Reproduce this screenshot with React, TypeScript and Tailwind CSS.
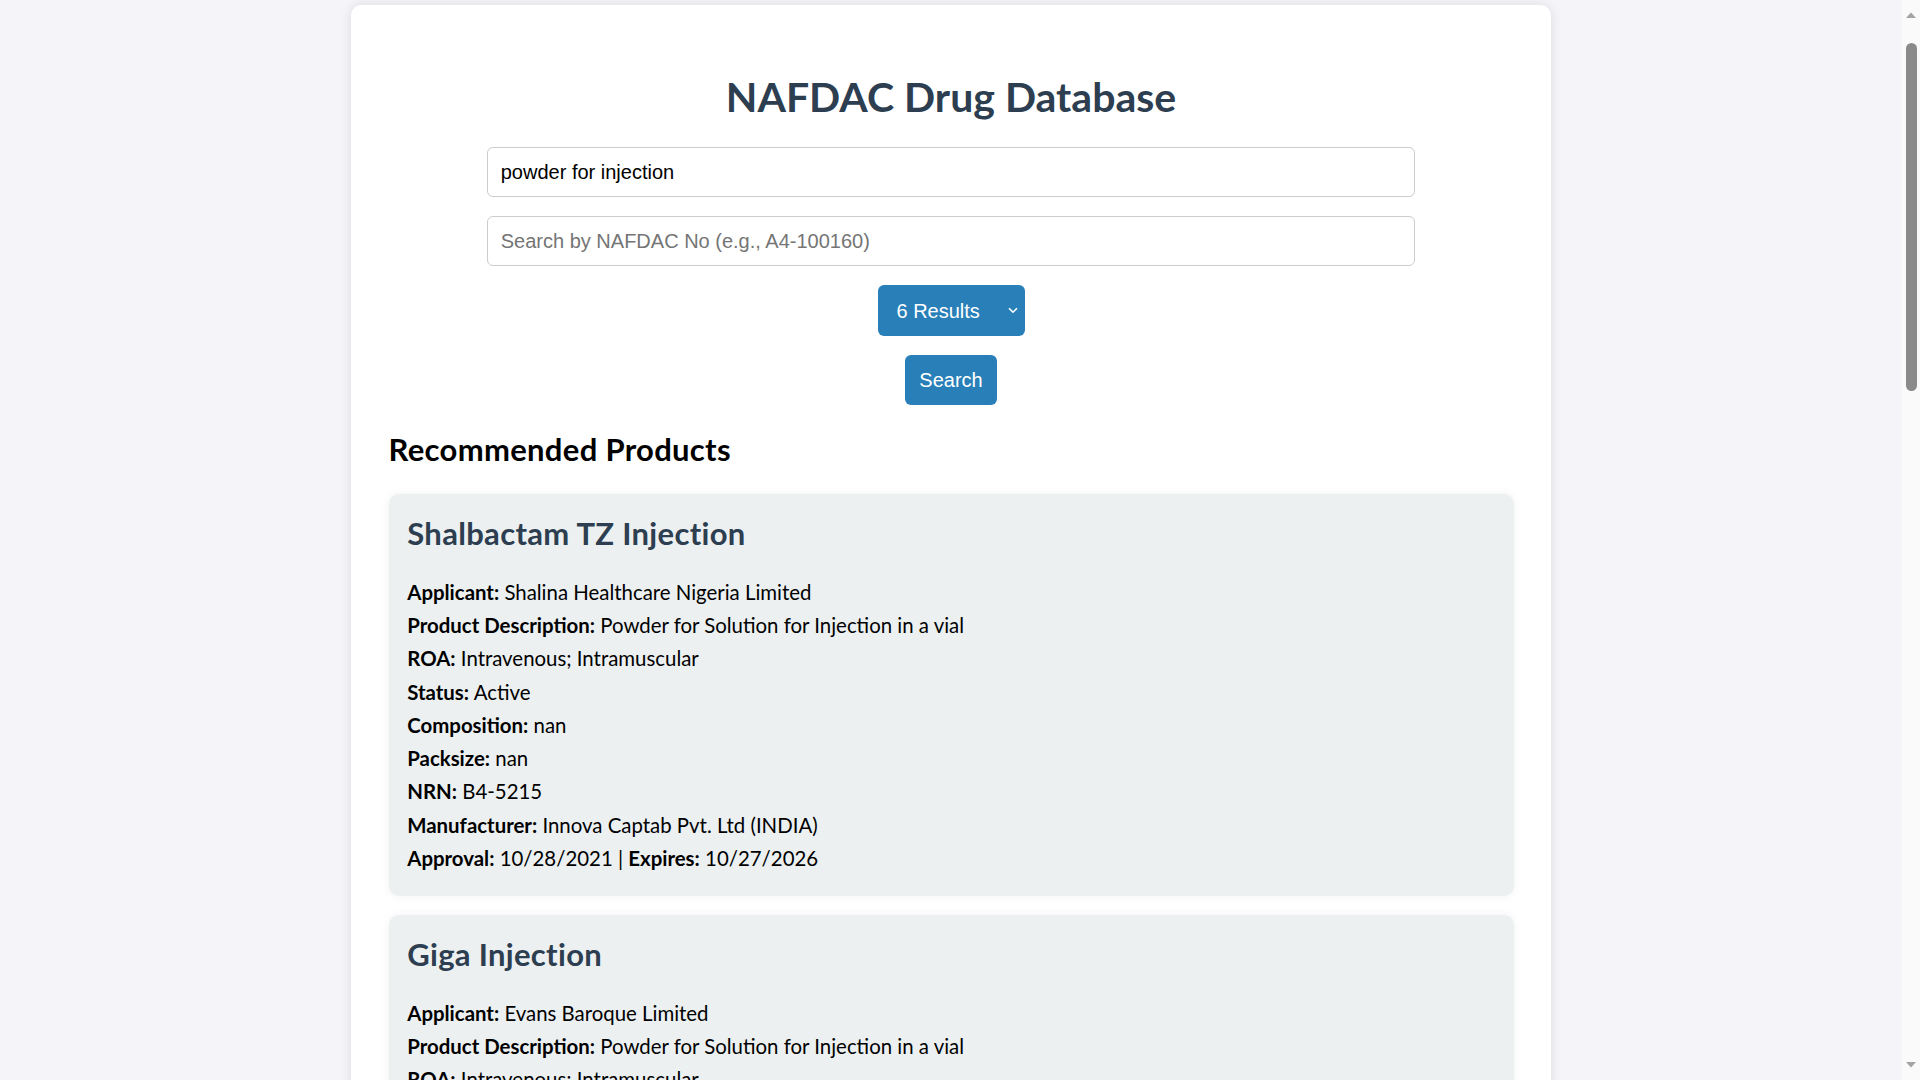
import React from "react";

type Product = {
  name: string;
  applicant: string;
  description: string;
  roa: string;
  status: string;
  composition: string;
  packsize: string;
  nrn: string;
  manufacturer: string;
  approval: string;
  expires: string;
};

const products: Product[] = [
  {
    name: "Shalbactam TZ Injection",
    applicant: "Shalina Healthcare Nigeria Limited",
    description: "Powder for Solution for Injection in a vial",
    roa: "Intravenous; Intramuscular",
    status: "Active",
    composition: "nan",
    packsize: "nan",
    nrn: "B4-5215",
    manufacturer: "Innova Captab Pvt. Ltd (INDIA)",
    approval: "10/28/2021",
    expires: "10/27/2026",
  },
  {
    name: "Giga Injection",
    applicant: "Evans Baroque Limited",
    description: "Powder for Solution for Injection in a vial",
    roa: "Intravenous; Intramuscular",
    status: "Active",
    composition: "nan",
    packsize: "nan",
    nrn: "B4-3127",
    manufacturer: "Reyoung Pharmaceutical Co., Ltd (CHINA)",
    approval: "03/16/2021",
    expires: "03/15/2026",
  },
  {
    name: "Ceftriaxone Sodium for Injection",
    applicant: "Emzor Pharmaceutical Industries Limited",
    description: "Powder for Solution for Injection in a vial",
    roa: "Intravenous; Intramuscular",
    status: "Active",
    composition: "nan",
    packsize: "nan",
    nrn: "A4-100160",
    manufacturer: "North China Pharmaceutical Co., Ltd (CHINA)",
    approval: "06/24/2022",
    expires: "06/23/2027",
  },
  {
    name: "Meropenem for Injection",
    applicant: "Fidson Healthcare Plc",
    description: "Powder for Solution for Injection in a vial",
    roa: "Intravenous",
    status: "Active",
    composition: "nan",
    packsize: "nan",
    nrn: "B4-4410",
    manufacturer: "Shenzhen Haibin Pharmaceutical Co., Ltd (CHINA)",
    approval: "09/12/2021",
    expires: "09/11/2026",
  },
  {
    name: "Amoxiclav Injection",
    applicant: "Swiss Pharma Nigeria Limited",
    description: "Powder for Solution for Injection in a vial",
    roa: "Intravenous",
    status: "Active",
    composition: "nan",
    packsize: "nan",
    nrn: "B4-2981",
    manufacturer: "Aurobindo Pharma Ltd (INDIA)",
    approval: "01/20/2022",
    expires: "01/19/2027",
  },
  {
    name: "Omeprazole for Injection",
    applicant: "May & Baker Nigeria Plc",
    description: "Powder for Solution for Injection in a vial",
    roa: "Intravenous",
    status: "Active",
    composition: "nan",
    packsize: "nan",
    nrn: "B4-6032",
    manufacturer: "Zhejiang Huahai Pharmaceutical Co., Ltd (CHINA)",
    approval: "11/05/2022",
    expires: "11/04/2027",
  },
];

function Line({ label, value }: { label: string; value: string }) {
  return (
    <p className="leading-[33.25px]">
      <span className="font-bold">{label}</span> {value}
    </p>
  );
}

function Card({ p }: { p: Product }) {
  return (
    <div className="bg-[#ecf0f1] rounded-[10px] shadow-[0_0_10px_rgba(0,0,0,0.06)] px-[18.75px] pt-[21px] pb-[20.5px]">
      <h3 className="text-[31px] tracking-[0.01em] leading-[36px] font-bold text-[#2c3e50] mb-[25px]">{p.name}</h3>
      <div className="text-[20.4px] text-black">
        <Line label="Applicant:" value={p.applicant} />
        <Line label="Product Description:" value={p.description} />
        <Line label="ROA:" value={p.roa} />
        <Line label="Status:" value={p.status} />
        <Line label="Composition:" value={p.composition} />
        <Line label="Packsize:" value={p.packsize} />
        <Line label="NRN:" value={p.nrn} />
        <Line label="Manufacturer:" value={p.manufacturer} />
        <p className="leading-[33.25px]">
          <span className="font-bold">Approval:</span> {p.approval} | <span className="font-bold">Expires:</span> {p.expires}
        </p>
      </div>
    </div>
  );
}

function Scrollbar() {
  return (
    <div className="w-[18px] h-[1080px] shrink-0 bg-[#fafafa] flex flex-col items-center">
      <svg width="12" height="8" viewBox="0 0 12 8" className="mt-[11px]">
        <path d="M1 7 L6 1.5 L11 7 Z" fill="#a3a3a3" />
      </svg>
      <div className="mt-[24px] w-[11px] h-[348px] rounded-full bg-[#8a8a8a]" />
      <div className="flex-1" />
      <svg width="12" height="8" viewBox="0 0 12 8" className="mb-[11px]">
        <path d="M1 1 L6 6.5 L11 1 Z" fill="#a3a3a3" />
      </svg>
    </div>
  );
}

export default function App() {
  return (
    <div className="flex h-[1080px] overflow-hidden bg-[#f4f4f9] font-['Lato','Noto_Sans',sans-serif]">
      <div className="flex-1 min-w-0 overflow-hidden">
        <div className="mx-auto max-w-[1200px] pt-[5px] pb-[20px]">
          <div className="bg-white rounded-[10px] shadow-[0_0_12px_rgba(0,0,0,0.1)] px-[37.5px] pt-[37.5px] pb-[37.5px]">
            <h1 className="mt-[30px] mb-[26.5px] text-center text-[41px] leading-[48px] font-bold text-[#2c3e50]">
              NAFDAC Drug Database
            </h1>
            <div className="flex flex-col items-center gap-[19px] font-['Liberation_Sans',Arial,sans-serif] text-[20px]">
              <input
                type="text"
                defaultValue="powder for injection"
                className="w-[927.5px] h-[50px] box-border border border-[#cccccc] rounded-[6px] px-[12.5px] text-black outline-none bg-white"
              />
              <input
                type="text"
                placeholder="Search by NAFDAC No (e.g., A4-100160)"
                className="w-[927.5px] h-[50px] box-border border border-[#cccccc] rounded-[6px] px-[12.5px] text-black outline-none bg-white placeholder:text-[#757575]"
              />
              <div className="w-[147px] h-[51px] rounded-[6px] bg-[#2980b9] text-white flex items-center justify-between pl-[19px] pr-[7px]">
                <span>6 Results</span>
                <svg width="10" height="7" viewBox="0 0 10 7" fill="none">
                  <path d="M1 1.2 L5 5.2 L9 1.2" stroke="white" strokeWidth="1.6" />
                </svg>
              </div>
              <button className="h-[50px] px-[14px] rounded-[6px] bg-[#2980b9] text-white">Search</button>
            </div>
            <h2 className="mt-[26.4px] mb-[26.6px] text-[31px] tracking-[0.01em] leading-[36px] font-bold text-black">
              Recommended Products
            </h2>
            <div className="flex flex-col gap-[19px]">
              {products.map((p) => (
                <Card key={p.name} p={p} />
              ))}
            </div>
          </div>
        </div>
      </div>
      <Scrollbar />
    </div>
  );
}
